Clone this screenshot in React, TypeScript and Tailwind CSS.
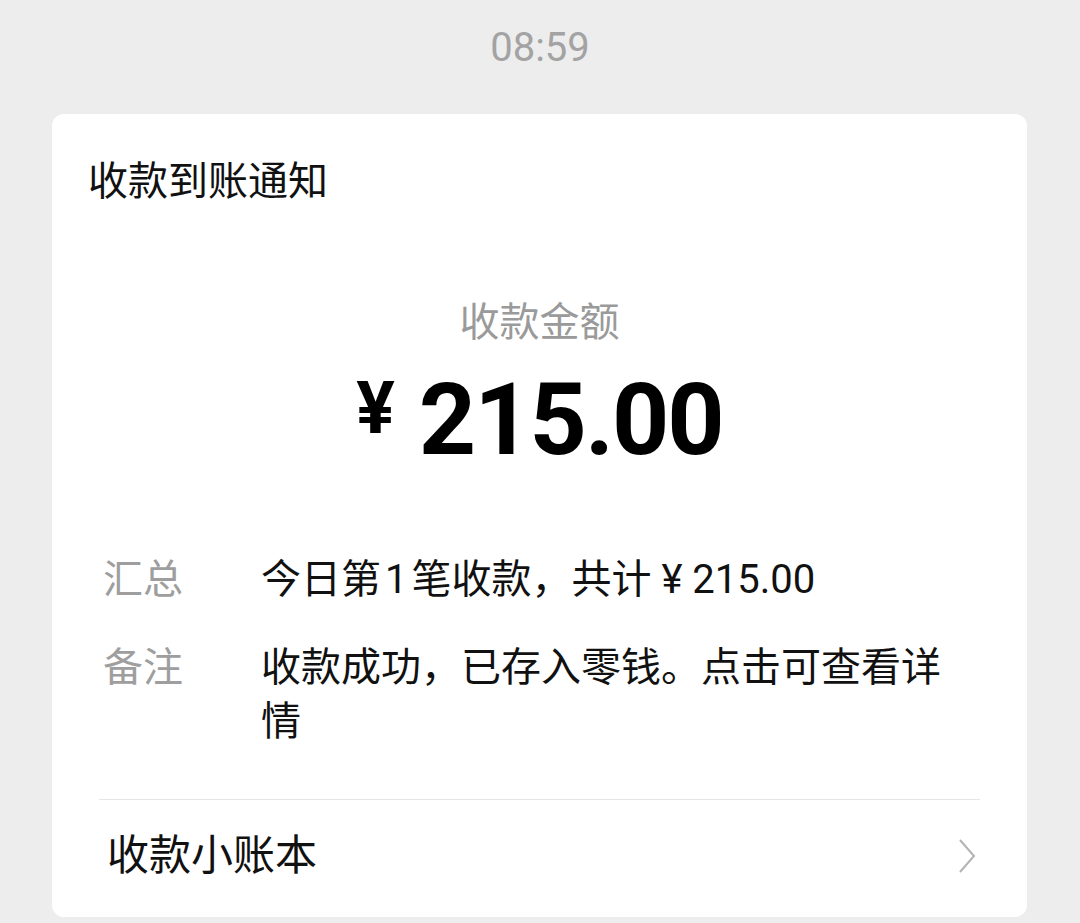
export default function App() {
  const font = { fontFamily: '"Roboto", "Noto Sans CJK SC", sans-serif' };

  return (
    <div className="min-h-[923px] bg-[#ededed] pb-[6px]" style={font}>
      <div className="h-[114px] flex justify-center pt-[28px]">
        <span className="text-[40px] leading-[40px] text-[#a3a3a3]">08:59</span>
      </div>

      <div className="bg-white rounded-[12px] ml-[52px] mr-[53px]">
        <div className="pl-[36px] pt-[48px] text-[40px] leading-[40px] text-[#111]">收款到账通知</div>

        <div className="mt-[101px] text-center text-[40px] leading-[40px] text-[#9a9a9a]">收款金额</div>

        <div className="mt-[27px] flex justify-center items-start text-black font-bold">
          <span className="text-[72px] leading-[72px] mt-[3px] mr-[24px]">¥</span>
          <span className="text-[100px] leading-[100px] tracking-[-2px]">215.00</span>
        </div>

        <div className="mt-[83px] pl-[51px] pr-[67px] flex flex-col gap-[34px] text-[40px] leading-[54px]">
          <div className="flex">
            <div className="w-[158px] shrink-0 text-[#9e9e9e]">汇总</div>
            <div className="text-[#111]">
              今日第<span className="mx-[4px]">1</span>笔收款，共计 ¥ 215.00
            </div>
          </div>
          <div className="flex">
            <div className="w-[158px] shrink-0 text-[#9e9e9e]">备注</div>
            <div className="text-[#111]">收款成功，已存入零钱。点击可查看详情</div>
          </div>
        </div>

        <div className="mt-[50px] mx-[47px] h-px bg-[#e6e6e6]" />

        <div className="mt-[35px] pb-[40px] pl-[55px] pr-[51px] flex items-center justify-between">
          <span className="text-[42px] leading-[42px] text-[#111]">收款小账本</span>
          <svg width="18" height="34" viewBox="0 0 18 34" fill="none">
            <polyline points="2,1 16,17 2,33" stroke="#b3b3b3" strokeWidth="2" />
          </svg>
        </div>
      </div>
    </div>
  );
}
